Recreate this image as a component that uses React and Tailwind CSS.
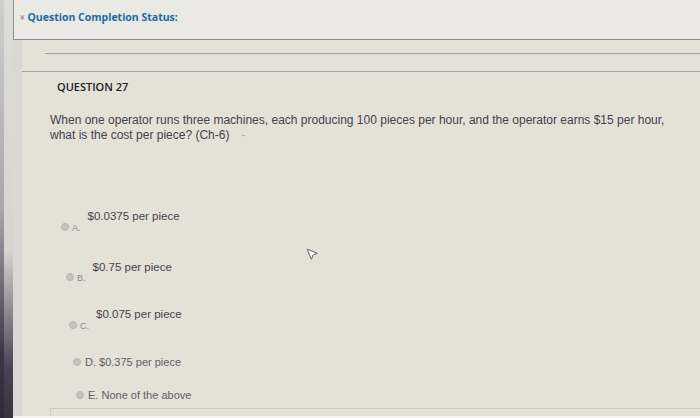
import { MousePointer2 } from 'lucide-react';

// Blackboard-style test page: completion status header, question stem and choices A–E.
const options = [
  { key: 'A.', text: '$0.0375 per piece', pad: 'pl-[39px]', top: 'mt-[76px]', split: true },
  { key: 'B.', text: '$0.75 per piece', pad: 'pl-[44px]', top: 'mt-[39px]', split: true },
  { key: 'C.', text: '$0.075 per piece', pad: 'pl-[47px]', top: 'mt-[36px]', split: true },
  { key: 'D.', text: '$0.375 per piece', pad: 'pl-[51px]', top: 'mt-[28px]', split: false },
  { key: 'E.', text: 'None of the above', pad: 'pl-[54px]', top: 'mt-[22px]', split: false },
];

function Radio() {
  return <span className="inline-block w-[8px] h-[8px] rounded-full bg-[#c4c3c0] border border-[#b9b8b4] shrink-0" />;
}

function Option({ o }) {
  if (o.split) {
    return (
      <div className={`flex items-end ${o.pad} ${o.top}`}>
        <Radio />
        <span className="ml-[3px] text-[9px] leading-none text-[#8a8a90] translate-y-[2px]">{o.key}</span>
        <span className="ml-[7px] text-[11.5px] leading-none text-[#45454d] -translate-y-[8px]">{o.text}</span>
      </div>
    );
  }
  return (
    <div className={`flex items-center ${o.pad} ${o.top}`}>
      <Radio />
      <span className="ml-[4px] text-[11px] leading-none text-[#606067]">
        {o.key} {o.text}
      </span>
    </div>
  );
}

export default function App() {
  return (
    <div
      className="w-[700px] h-[418px] overflow-hidden relative flex bg-[linear-gradient(180deg,#e9e7e1_0%,#e6e3d9_45%,#dcd8cc_75%,#cfcbbf_100%)]"
      style={{ fontFamily: '"Liberation Sans", Arial, sans-serif' }}
    >
      {/* screen bezel on the left */}
      <div className="w-[4px] shrink-0 bg-[linear-gradient(180deg,#cfcfcf_0%,#a9a6aa_50%,#3b3546_85%,#2f2a3a_100%)]" />
      <div className="w-[9px] shrink-0 bg-[linear-gradient(180deg,#dcdcd8_0%,#d6d4cf_60%,#4a4452_88%,#39333f_100%)]" />

      <div className="flex-1 flex flex-col min-w-0">
        {/* header */}
        <div className="h-[40px] shrink-0 border-l border-b border-[#8f8e99] flex items-start pt-[10px] pl-[6px] bg-[#ebe9e4]">
          <span className="text-[8px] text-[#8b8a94] mr-[3px] mt-[2px]">¥</span>
          <span
            className="text-[10.5px] font-bold text-[#1b6ba6]"
            style={{ fontFamily: '"Open Sans", "Noto Sans", sans-serif' }}
          >
            Question Completion Status:
          </span>
        </div>

        <div className="flex flex-1 min-h-0">
          <div className="w-[9px] shrink-0 bg-[#d9d8d2]" />
          <div className="flex-1 flex flex-col min-w-0 bg-[#e4e1d6]">
            <div className="h-[13px] shrink-0" />
            <div className="ml-[23px] border-t border-[#a09fae]" />
            <div className="h-[17px] shrink-0" />
            <div className="border-t border-[#a3a2b0]" />

            <div className="relative flex-1 flex flex-col">
              <div
                className="pl-[35px] pt-[9px] text-[11px] font-semibold text-[#222226] leading-none"
                style={{ fontFamily: '"Open Sans", "Noto Sans", sans-serif' }}
              >
                QUESTION 27
              </div>

              <p className="pl-[28px] pt-[21px] pr-[20px] text-[12px] leading-[15px] text-[#43434b]">
                When one operator runs three machines, each producing 100 pieces per hour, and the operator earns $15 per hour,
                <br />
                what is the cost per piece? (Ch-6)
                <span className="ml-[12px] text-[#a9a8b0]">-</span>
              </p>

              {options.map((o) => (
                <Option key={o.key} o={o} />
              ))}

              <div className="ml-[28px] mt-auto h-[8px] border-t border-l border-[#cfccc2]" />

              <MousePointer2
                size={14}
                strokeWidth={1.6}
                className="absolute left-[283px] top-[175px] text-[#55555c] fill-white"
              />
            </div>
          </div>
        </div>
        <div className="h-[2px] shrink-0 bg-[#f4f3f0]" />
      </div>
    </div>
  );
}
